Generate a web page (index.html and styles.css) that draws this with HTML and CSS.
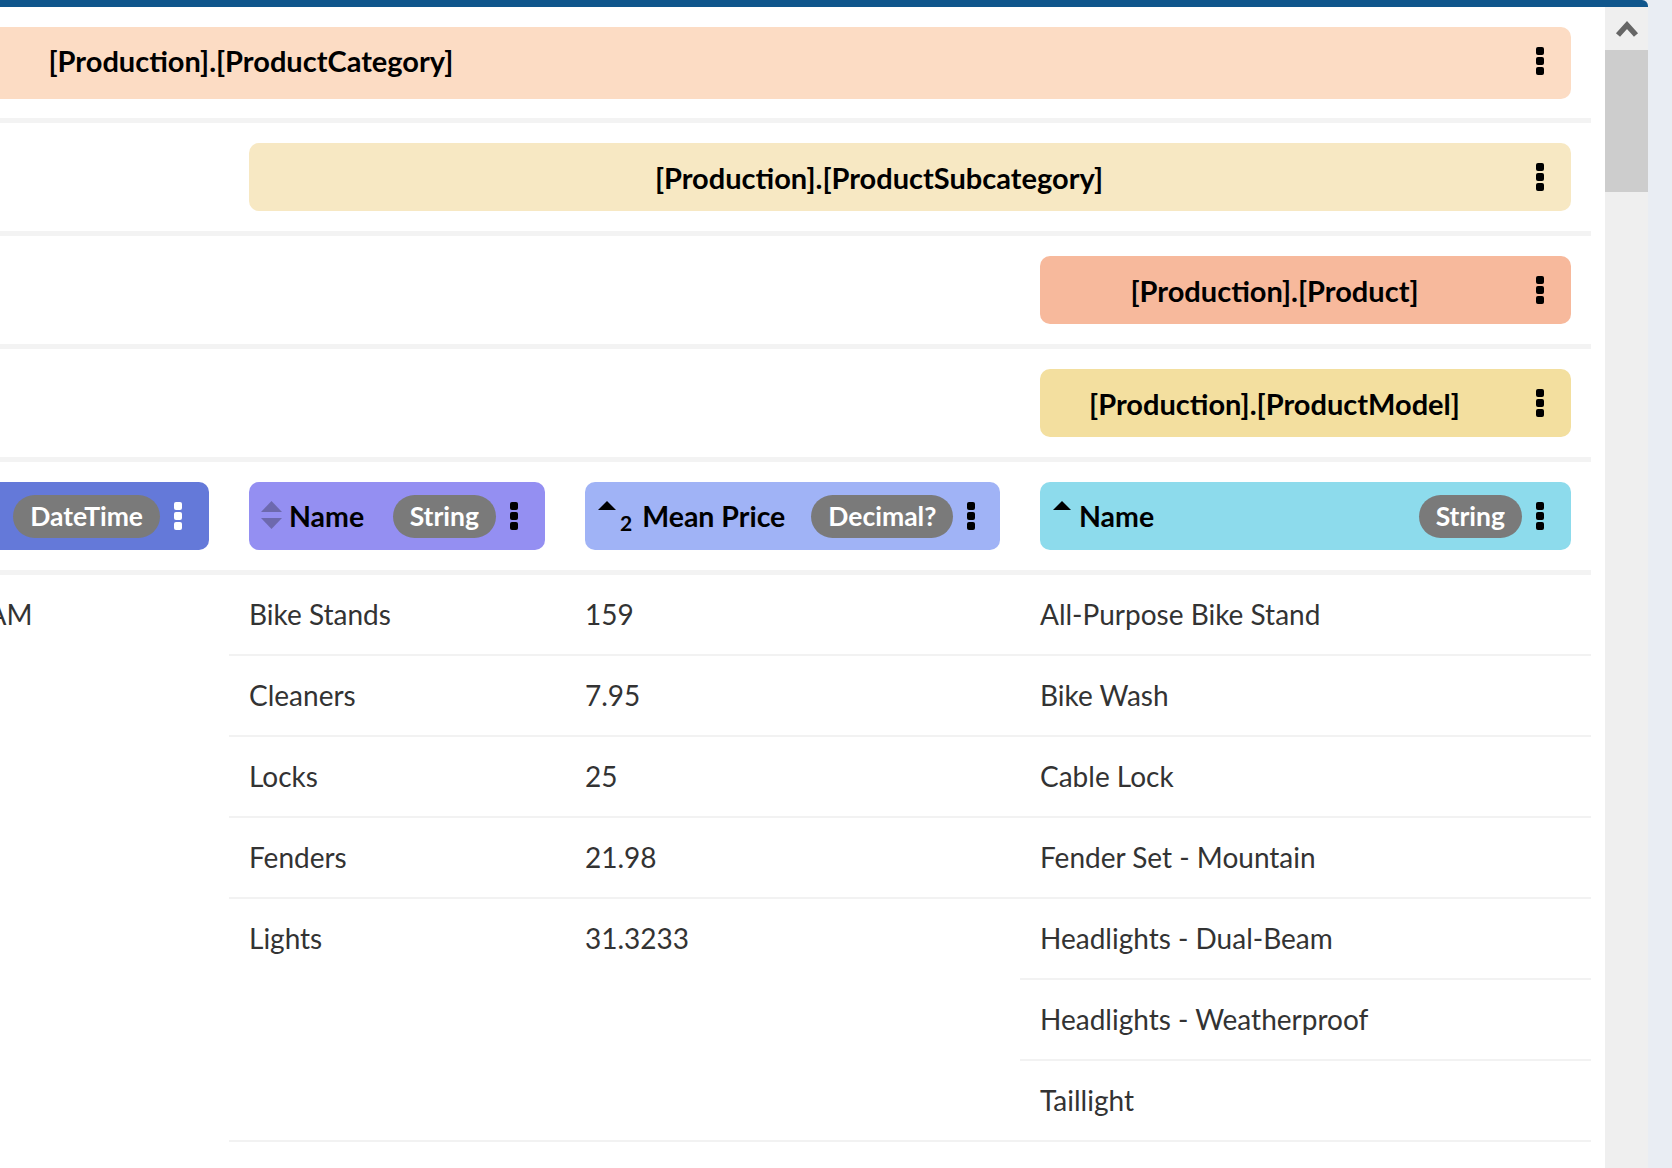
FILE: index.html
```html
<!DOCTYPE html>
<html lang="en">
<head>
<meta charset="utf-8">
<title>Query results</title>
<link rel="stylesheet" href="styles.css">
</head>
<body>
<div class="window">
  <div class="panel">
    <div class="panel-body">
      <div class="viewport">
        <div class="table">
          <div class="band band-cat">
            <div class="hdr hdr-cat c-cat">
              <div class="title">[Production].[ProductCategory]</div>
              <div class="dots"><i></i><i></i><i></i></div>
            </div>
          </div>
          <div class="sep"></div>
          <div class="band indent2">
            <div class="hdr c-sub">
              <div class="title">[Production].[ProductSubcategory]</div>
              <div class="dots"><i></i><i></i><i></i></div>
            </div>
          </div>
          <div class="sep"></div>
          <div class="band indent3">
            <div class="hdr c-prod">
              <div class="title">[Production].[Product]</div>
              <div class="dots"><i></i><i></i><i></i></div>
            </div>
          </div>
          <div class="sep"></div>
          <div class="band indent3">
            <div class="hdr c-model">
              <div class="title">[Production].[ProductModel]</div>
              <div class="dots"><i></i><i></i><i></i></div>
            </div>
          </div>
          <div class="sep"></div>
          <div class="colheads">
            <div class="cell w1">
              <div class="colhdr k-catname">
                <span class="sort"><svg width="20" height="28" viewBox="0 0 20 28"><polygon points="0,11 10,1 20,11" fill="#6d69ae"/><polygon points="0,17 10,27 20,17" fill="#6d69ae"/></svg></span>
                <span class="lbl">Name</span>
                <span class="pill">String</span>
                <div class="dots"><i></i><i></i><i></i></div>
              </div>
            </div>
            <div class="cell w2">
              <div class="colhdr k-date">
                <span class="sort"><svg width="20" height="28" viewBox="0 0 20 28"><polygon points="0,11 10,1 20,11" fill="#4b5cb0"/><polygon points="0,17 10,27 20,17" fill="#4b5cb0"/></svg></span>
                <span class="lbl">ModifiedDate</span>
                <span class="pill">DateTime</span>
                <div class="dots light"><i></i><i></i><i></i></div>
              </div>
            </div>
            <div class="cell w3">
              <div class="colhdr k-subname">
                <span class="sort"><svg width="21" height="28" viewBox="0 0 21 28"><polygon points="0,11 10.5,0 21,11" fill="#6d69ae"/><polygon points="0,17 10.5,28 21,17" fill="#6d69ae"/></svg></span>
                <span class="lbl">Name</span>
                <span class="pill">String</span>
                <div class="dots"><i></i><i></i><i></i></div>
              </div>
            </div>
            <div class="cell w4">
              <div class="colhdr k-price">
                <span class="sort sort-sub"><svg class="tri" width="20" height="9" viewBox="0 0 20 9"><polygon points="1,9 10,0 19,9" fill="#000"/></svg><span class="ord">2</span></span>
                <span class="lbl">Mean Price</span>
                <span class="pill">Decimal?</span>
                <div class="dots"><i></i><i></i><i></i></div>
              </div>
            </div>
            <div class="cell w5">
              <div class="colhdr k-prodname">
                <span class="sort"><svg class="tri" width="20" height="9" viewBox="0 0 20 9"><polygon points="1,9 10,0 19,9" fill="#000"/></svg></span>
                <span class="lbl">Name</span>
                <span class="pill">String</span>
                <div class="dots"><i></i><i></i><i></i></div>
              </div>
            </div>
          </div>
          <div class="sep"></div>
          <div class="rows">
            <div class="cell w1"><div class="val">Accessories</div></div>
            <div class="cell w2"><div class="val">6/1/2002 12:00:00 AM</div></div>
            <div class="subs">
              <div class="sub">
                <div class="cell w3"><div class="val">Bike Stands</div></div>
                <div class="cell w4"><div class="val">159</div></div>
                <div class="prods">
                  <div class="prod"><div class="cell w5"><div class="val">All-Purpose Bike Stand</div></div></div>
                </div>
              </div>
              <div class="sub">
                <div class="cell w3"><div class="val">Cleaners</div></div>
                <div class="cell w4"><div class="val">7.95</div></div>
                <div class="prods">
                  <div class="prod"><div class="cell w5"><div class="val">Bike Wash</div></div></div>
                </div>
              </div>
              <div class="sub">
                <div class="cell w3"><div class="val">Locks</div></div>
                <div class="cell w4"><div class="val">25</div></div>
                <div class="prods">
                  <div class="prod"><div class="cell w5"><div class="val">Cable Lock</div></div></div>
                </div>
              </div>
              <div class="sub">
                <div class="cell w3"><div class="val">Fenders</div></div>
                <div class="cell w4"><div class="val">21.98</div></div>
                <div class="prods">
                  <div class="prod"><div class="cell w5"><div class="val">Fender Set - Mountain</div></div></div>
                </div>
              </div>
              <div class="sub">
                <div class="cell w3"><div class="val">Lights</div></div>
                <div class="cell w4"><div class="val">31.3233</div></div>
                <div class="prods">
                  <div class="prod"><div class="cell w5"><div class="val">Headlights - Dual-Beam</div></div></div>
                  <div class="prod"><div class="cell w5"><div class="val">Headlights - Weatherproof</div></div></div>
                  <div class="prod"><div class="cell w5"><div class="val">Taillight</div></div></div>
                </div>
              </div>
            </div>
          </div>
        </div>
      </div>
      <div class="scrollbar">
        <div class="sb-btn"><svg width="24" height="18" viewBox="0 0 24 18"><polyline points="3,15 12,5 21,15" fill="none" stroke="#666" stroke-width="5.5"/></svg></div>
        <div class="sb-thumb"></div>
      </div>
    </div>
  </div>
</div>
</body>
</html>
```
FILE: styles.css
```css
* { box-sizing: border-box; }
html, body { margin: 0; padding: 0; }
body {
  width: 1672px;
  height: 1168px;
  overflow: hidden;
  background: #e9edf3;
  font-family: Lato, "Segoe UI", "Noto Sans", sans-serif;
  color: #000;
  --c1: 707px;
  --c2: 469px;
  --c3: 296px;
  --c4: 415px;
  --c5: 531px;
}
.window { display: flex; height: 1168px; }
.panel {
  width: 1648px;
  display: flex;
  flex-direction: column;
  background: #fff;
  border-top: 7px solid #10568c;
  border-top-right-radius: 6px;
}
.panel-body { flex: 1; display: flex; min-height: 0; }
.viewport { flex: 1; overflow: hidden; }
.scrollbar { width: 43px; background: #efefef; display: flex; flex-direction: column; }
.sb-btn { height: 43px; display: flex; align-items: center; justify-content: center; }
.sb-thumb { height: 142px; background: #cdcdcd; }

.table { margin-left: -1027px; width: 2618px; }

.sep { height: 5px; background: #f3f3f3; }
.band { padding: 20px; }
.band-cat { padding: 20px 20px 19px; }
.indent2 { margin-left: calc(var(--c1) + var(--c2) + 80px); }
.indent3 { margin-left: calc(var(--c1) + var(--c2) + var(--c3) + var(--c4) + 160px); }

.hdr {
  height: 68px;
  border-radius: 10px;
  display: flex;
  align-items: center;
}
.hdr-cat { height: 72px; padding-bottom: 5px; }
.hdr .title {
  flex: 1;
  text-align: center;
  font-weight: 700;
  font-size: 29px;
  white-space: nowrap;
}
.hdr .dots { margin: 0 27px; }
.c-cat { background: #fcdcc4; }
.c-sub { background: #f7e8c3; }
.c-prod { background: #f7b99c; }
.c-model { background: #f3df9f; }

.dots { width: 8px; display: flex; flex-direction: column; gap: 2px; flex: none; }
.dots i { display: block; width: 8px; height: 8px; border-radius: 2px; background: #000; }
.dots.light i { background: #fff; }

.colheads, .rows { display: flex; }
.cell { flex: none; padding: 0 20px; }
.w1 { width: calc(var(--c1) + 40px); }
.w2 { width: calc(var(--c2) + 40px); }
.w3 { width: calc(var(--c3) + 40px); }
.w4 { width: calc(var(--c4) + 40px); }
.w5 { width: calc(var(--c5) + 40px); }
.colheads .cell { padding-top: 20px; padding-bottom: 20px; }

.colhdr {
  height: 68px;
  border-radius: 10px;
  display: flex;
  align-items: center;
  padding-left: 12px;
}
.k-catname { background: #948ff2; }
.k-date { background: #6479d9; }
.k-subname { background: #948ff2; }
.k-price { background: #a0b3f6; }
.k-prodname { background: #8ddbec; }

.sort {
  flex: none;
  height: 30px;
  margin-right: 7px;
  display: flex;
}
.sort .tri { align-self: flex-start; }
.sort-sub { margin-right: 10px; }
.sort .ord {
  align-self: flex-end;
  font-weight: 700;
  font-size: 21px;
  line-height: 16px;
  margin-left: 3px;
}
.lbl {
  flex: 1;
  font-weight: 700;
  font-size: 28.5px;
  white-space: nowrap;
  margin-right: 26px;
}
.pill {
  flex: none;
  height: 43px;
  border-radius: 22px;
  background: #7a7a7a;
  color: #fff;
  font-weight: 700;
  font-size: 26.5px;
  padding: 0 17px;
  display: flex;
  align-items: center;
  white-space: nowrap;
}
.colhdr .dots { margin-left: 14px; margin-right: 27px; }

.subs { flex: 1; display: flex; flex-direction: column; }
.sub { display: flex; border-bottom: 2px solid #f2f2f2; }
.prods { flex: 1; display: flex; flex-direction: column; }
.prod:not(:last-child) { border-bottom: 2px solid #f2f2f2; }
.val {
  height: 79px;
  line-height: 79px;
  font-size: 28px;
  color: #333;
  white-space: nowrap;
}
```
